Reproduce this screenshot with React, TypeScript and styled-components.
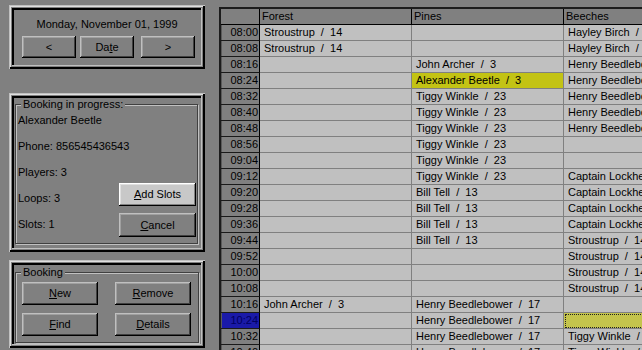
import React from "react";
import styled, { createGlobalStyle } from "styled-components";

const GlobalStyle = createGlobalStyle`
  html, body {
    margin: 0;
    padding: 0;
    background: #808080;
    overflow: hidden;
  }
  body {
    font-family: "Liberation Sans", Arial, sans-serif;
    font-size: 11px;
    color: #000;
  }
`;

type Row = {
  t: string;
  forest?: string;
  pines?: string;
  beeches?: string;
  hot?: "pines" | "beeches";
  now?: boolean;
};

const rows: Row[] = [
  { t: "08:00", forest: "Stroustrup  /  14", beeches: "Hayley Birch  /  6" },
  { t: "08:08", forest: "Stroustrup  /  14", beeches: "Hayley Birch  /  6" },
  { t: "08:16", pines: "John Archer  /  3", beeches: "Henry Beedlebower  /  17" },
  { t: "08:24", pines: "Alexander Beetle  /  3", beeches: "Henry Beedlebower  /  17", hot: "pines" },
  { t: "08:32", pines: "Tiggy Winkle  /  23", beeches: "Henry Beedlebower  /  17" },
  { t: "08:40", pines: "Tiggy Winkle  /  23", beeches: "Henry Beedlebower  /  17" },
  { t: "08:48", pines: "Tiggy Winkle  /  23", beeches: "Henry Beedlebower  /  17" },
  { t: "08:56", pines: "Tiggy Winkle  /  23" },
  { t: "09:04", pines: "Tiggy Winkle  /  23" },
  { t: "09:12", pines: "Tiggy Winkle  /  23", beeches: "Captain Lockheart  /  8" },
  { t: "09:20", pines: "Bill Tell  /  13", beeches: "Captain Lockheart  /  8" },
  { t: "09:28", pines: "Bill Tell  /  13", beeches: "Captain Lockheart  /  8" },
  { t: "09:36", pines: "Bill Tell  /  13", beeches: "Captain Lockheart  /  8" },
  { t: "09:44", pines: "Bill Tell  /  13", beeches: "Stroustrup  /  14" },
  { t: "09:52", beeches: "Stroustrup  /  14" },
  { t: "10:00", beeches: "Stroustrup  /  14" },
  { t: "10:08", beeches: "Stroustrup  /  14" },
  { t: "10:16", forest: "John Archer  /  3", pines: "Henry Beedlebower  /  17" },
  { t: "10:24", pines: "Henry Beedlebower  /  17", hot: "beeches", now: true },
  { t: "10:32", pines: "Henry Beedlebower  /  17", beeches: "Tiggy Winkle  /  23" },
  { t: "10:40", pines: "Henry Beedlebower  /  17", beeches: "Tiggy Winkle  /  23" },
];

export default function App() {
  return (
    <>
      <GlobalStyle />
      <Screen>
        <SidePane>
          <Panel $h={64}>
            <DateBox>
              <DateLine>Monday, November 01, 1999</DateLine>
              <NavRow>
                <Button $w={54} $h={22}>&lt;</Button>
                <Button $w={54} $h={22}>
                  Da<u>t</u>e
                </Button>
                <Button $w={54} $h={22} $push>
                  &gt;
                </Button>
              </NavRow>
            </DateBox>
          </Panel>

          <Panel $h={159} $mt={24}>
            <Group $m="0 3px 4px 1px">
              <Legend>Booking in progress:</Legend>
              <BookingBody>
                <Facts>
                  <span>Alexander Beetle</span>
                  <span>Phone: 856545436543</span>
                  <span>Players: 3</span>
                  <span>Loops: 3</span>
                  <span>Slots: 1</span>
                </Facts>
                <SlotActions>
                  <Button $w={77} $h={23} $light>
                    <u>A</u>dd Slots
                  </Button>
                  <Button $w={77} $h={24}>
                    <u>C</u>ancel
                  </Button>
                </SlotActions>
              </BookingBody>
            </Group>
          </Panel>

          <Panel $h={88} $mt={8}>
            <Group $m="1px 2px 1px 1px">
              <Legend>Booking</Legend>
              <ActionGrid>
                <Button $w={76} $h={23}>
                  <u>N</u>ew
                </Button>
                <Button $w={76} $h={23}>
                  <u>R</u>emove
                </Button>
                <Button $w={76} $h={23}>
                  <u>F</u>ind
                </Button>
                <Button $w={76} $h={23}>
                  <u>D</u>etails
                </Button>
              </ActionGrid>
            </Group>
          </Panel>
        </SidePane>

        <Sheet>
          <HeadCell />
          <HeadCell>Forest</HeadCell>
          <HeadCell>Pines</HeadCell>
          <HeadCell>Beeches</HeadCell>
          {rows.map((r) => (
            <React.Fragment key={r.t}>
              <TimeCell $now={r.now}>{r.t}</TimeCell>
              <SlotCell>{r.forest}</SlotCell>
              <SlotCell $tone={r.hot === "pines" ? "pick" : undefined}>{r.pines}</SlotCell>
              <SlotCell $tone={r.hot === "beeches" ? "focus" : undefined}>{r.beeches}</SlotCell>
            </React.Fragment>
          ))}
        </Sheet>
      </Screen>
    </>
  );
}

const Screen = styled.div`
  display: flex;
  align-items: flex-start;
  width: 642px;
  height: 350px;
  overflow: hidden;
`;

const SidePane = styled.div`
  flex: none;
  display: flex;
  flex-direction: column;
  width: 196px;
  padding: 5px 0 0 9px;
`;

const Panel = styled.section<{ $h: number; $mt?: number }>`
  box-sizing: border-box;
  display: flex;
  flex-direction: column;
  height: ${(p) => p.$h}px;
  margin-top: ${(p) => p.$mt ?? 0}px;
  padding: 5px 4px 4px 5px;
  background: #808080;
  box-shadow:
    inset 1px 1px 0 #c0c0c0,
    inset -2px -2px 0 #000,
    inset 2px 2px 0 #dfdfdf,
    inset -3px -3px 0 #808080,
    inset 3px 3px 0 #808080,
    inset -4px -4px 0 #c0c0c0,
    inset 5px 5px 0 #000;
`;

const DateBox = styled.div`
  display: flex;
  flex-direction: column;
  padding: 8px 6px 0 8px;
`;

const DateLine = styled.div`
  line-height: 13px;
  text-align: center;
  margin-left: -3px;
`;

const NavRow = styled.div`
  display: flex;
  gap: 4px;
  margin-top: 5px;
`;

const Button = styled.button<{ $w: number; $h: number; $light?: boolean; $push?: boolean }>`
  box-sizing: border-box;
  width: ${(p) => p.$w}px;
  height: ${(p) => p.$h}px;
  margin-left: ${(p) => (p.$push ? "auto" : "0")};
  padding: 0;
  border: 0;
  font-family: inherit;
  font-size: 11px;
  line-height: 13px;
  color: #000;
  background: ${(p) => (p.$light ? "#c8c8c8" : "#808080")};
  box-shadow: ${(p) =>
    p.$light
      ? "inset -1px -1px 0 #000, inset 1px 1px 0 #fff, inset -2px -2px 0 #808080, inset 2px 2px 0 #dfdfdf"
      : "inset -1px -1px 0 #000, inset 1px 1px 0 #c0c0c0, inset -2px -2px 0 #404040, inset 2px 2px 0 #a0a0a0"};

  u {
    text-decoration-thickness: 1px;
    text-underline-offset: 1px;
  }
`;

const Group = styled.fieldset<{ $m: string }>`
  flex: 1;
  min-width: 0;
  margin: ${(p) => p.$m};
  padding: 0;
  border: 1px solid #404040;
  box-shadow: 1px 1px 0 #c0c0c0, inset 1px 1px 0 #c0c0c0;
  display: flex;
  flex-direction: column;
`;

const Legend = styled.legend`
  margin-left: 5px;
  padding: 0 2px;
  line-height: 13px;
  background: #808080;
`;

const BookingBody = styled.div`
  box-sizing: border-box;
  flex: 1;
  min-height: 130px;
  display: flex;
  padding: 3px 1px 4px 2px;
`;

const Facts = styled.div`
  flex: none;
  width: 90px;
  display: flex;
  flex-direction: column;
  gap: 13px;
  line-height: 13px;
  white-space: nowrap;
`;

const SlotActions = styled.div`
  margin-left: auto;
  display: flex;
  flex-direction: column;
  justify-content: flex-end;
  gap: 7px;
`;

const ActionGrid = styled.div`
  display: grid;
  grid-template-columns: 76px 76px;
  column-gap: 17px;
  row-gap: 8px;
  padding: 3px 0 0 6px;
`;

const Sheet = styled.div`
  flex: none;
  display: grid;
  grid-template-columns: 39px 152px 152px 152px;
  grid-auto-rows: 16px;
  margin: 7px 0 0 14px;
  border-top: 2px solid #1c1c1c;
  border-left: 2px solid #1c1c1c;
  background: #c0c0c0;
`;

const HeadCell = styled.div`
  box-sizing: border-box;
  padding-left: 2px;
  line-height: 15px;
  background: #808080;
  border-right: 1px solid #000;
  border-bottom: 1px solid #000;
  white-space: nowrap;
  overflow: hidden;
`;

const TimeCell = styled.div<{ $now?: boolean }>`
  box-sizing: border-box;
  padding-right: 1px;
  text-align: right;
  line-height: 15px;
  background: ${(p) => (p.$now ? "#1a1aa8" : "#808080")};
  color: ${(p) => (p.$now ? "#000060" : "#000")};
  border-right: 1px solid #000;
  border-bottom: 1px solid #1a1a1a;
  box-shadow: inset 1px 0 0 #5a5a5a;
`;

const SlotCell = styled.div<{ $tone?: "pick" | "focus" }>`
  box-sizing: border-box;
  padding-left: 4px;
  line-height: 15px;
  white-space: pre;
  overflow: hidden;
  background: ${(p) => (p.$tone === "pick" ? "#c3c314" : p.$tone === "focus" ? "#c4c44c" : "#c0c0c0")};
  border-right: 1px solid #808080;
  border-bottom: 1px solid #808080;
  outline: ${(p) => (p.$tone === "focus" ? "1px dotted #202020" : "none")};
  outline-offset: -2px;
`;
